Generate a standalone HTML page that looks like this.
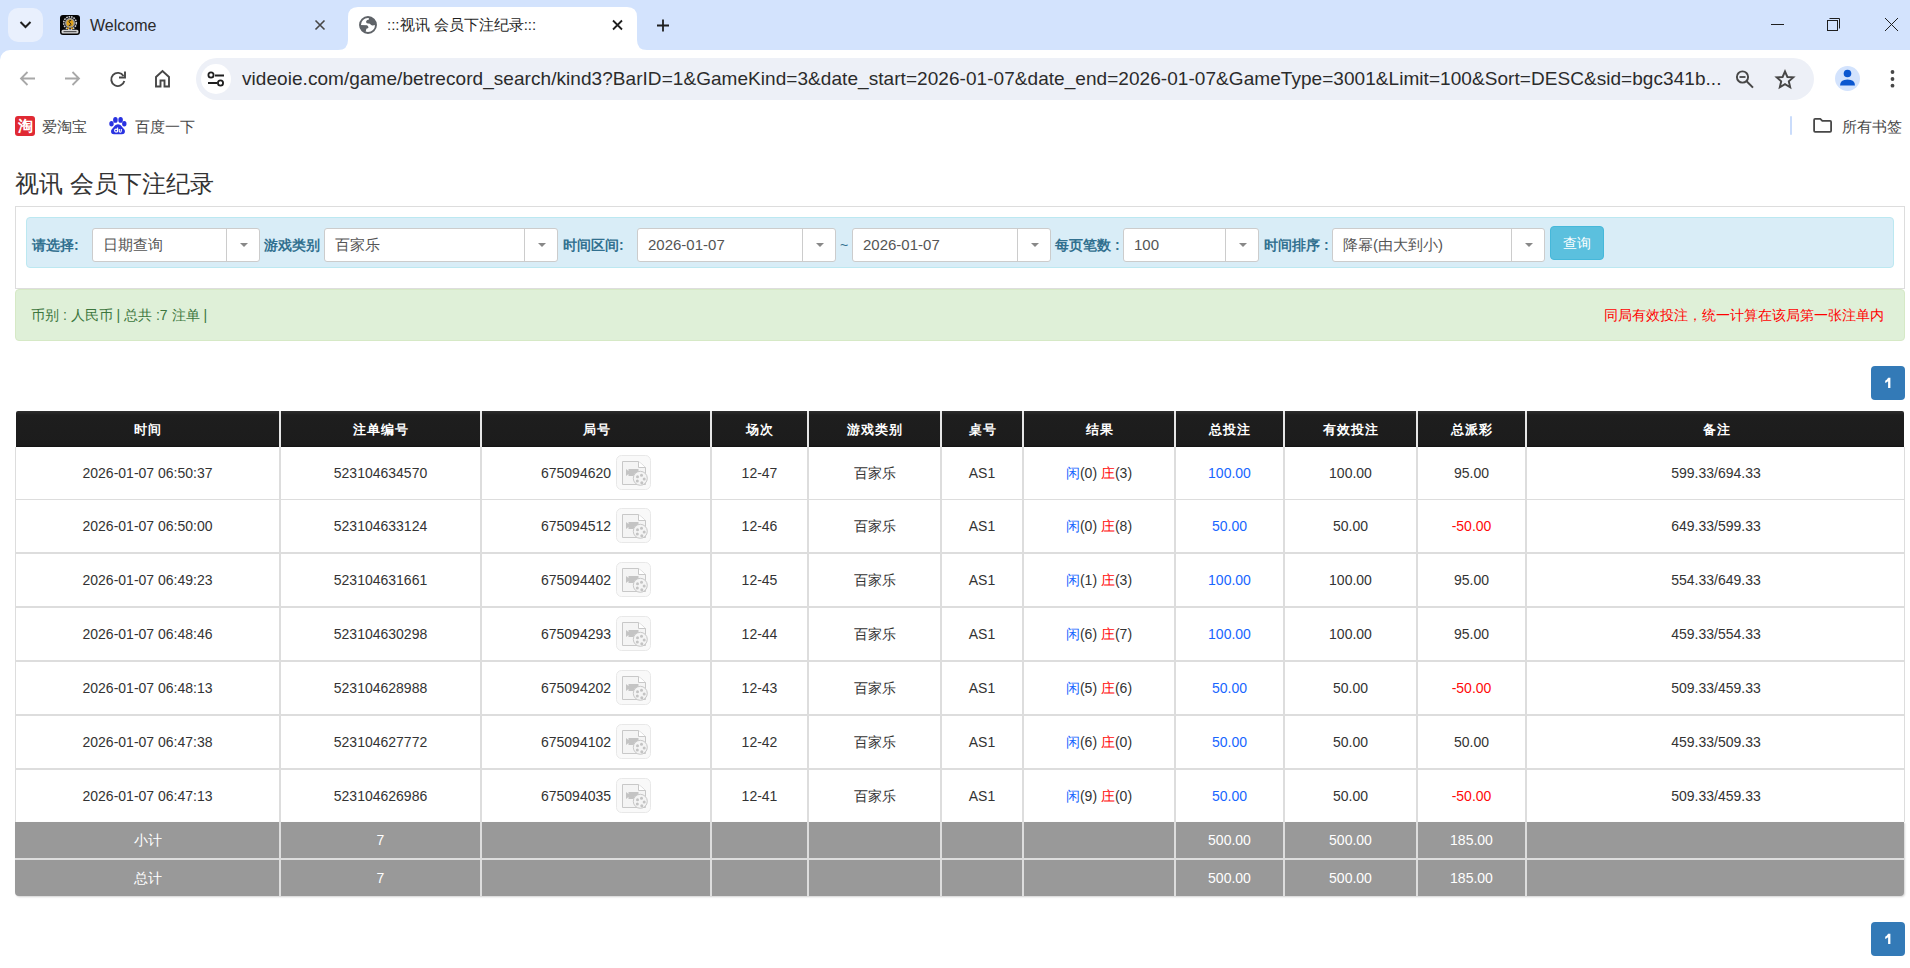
<!DOCTYPE html>
<html><head><meta charset="utf-8">
<style>
*{box-sizing:border-box}
html,body{margin:0;padding:0}
body{width:1910px;height:968px;overflow:hidden;position:relative;background:#fff;font-family:"Liberation Sans",sans-serif;color:#333}
.abs{position:absolute}
#tabstrip{left:0;top:0;width:1910px;height:62px;background:#d3e3fd}
#toolbar{left:0;top:50px;width:1910px;height:58px;background:#fff;border-top-left-radius:10px}
#omni{left:196px;top:58px;width:1618px;height:42px;border-radius:21px;background:#edf0f7}
.sel{position:absolute;top:228px;height:34px;background:#fff;border:1px solid #ccc;border-radius:3px}
.sel .d{position:absolute;top:0;bottom:0;right:32px;width:1px;background:#ccc}
.sel .c{position:absolute;top:14px;right:11.5px;width:0;height:0;border-left:4px solid transparent;border-right:4px solid transparent;border-top:4.5px solid #888}
.sel .t{position:absolute;left:10px;top:0;line-height:32px;font-size:15px;color:#555}
.cell{position:absolute;text-align:center;font-size:14px;color:#333;white-space:nowrap}
.film{display:inline-block;width:35px;height:35px;vertical-align:middle;margin-left:5px;position:relative;top:-2px}
.film svg{display:block}
.bl{color:#1866ff}.rd{color:#ff0a0a}
.lbl{position:absolute;top:236px;font-size:14px;font-weight:bold;color:#31708f;line-height:18px}
</style></head><body>
<!-- ===== Chrome tab strip ===== -->
<div id="tabstrip" class="abs"></div>
<div class="abs" style="left:8px;top:8px;width:35px;height:34px;border-radius:10px;background:#e9f0fd"></div>
<svg class="abs" style="left:0;top:0" width="1910" height="50" viewBox="0 0 1910 50">
  <!-- dropdown chevron -->
  <path d="M20.5 22 L25.5 27 L30.5 22" fill="none" stroke="#1f1f1f" stroke-width="2"/>
  <!-- active tab shape -->
  <path d="M338 50 Q348 50 348 40 L348 17 Q348 7 358 7 L627 7 Q637 7 637 17 L637 40 Q637 50 647 50 Z" fill="#fff"/>
  <!-- inactive close x -->
  <path d="M315.5 20.5 L324.5 29.5 M324.5 20.5 L315.5 29.5" stroke="#474747" stroke-width="1.6"/>
  <!-- active close x -->
  <path d="M613 20.5 L622 29.5 M622 20.5 L613 29.5" stroke="#1f1f1f" stroke-width="1.8"/>
  <!-- plus -->
  <path d="M663 19.5 L663 31.5 M657 25.5 L669 25.5" stroke="#1f1f1f" stroke-width="1.8"/>
  <!-- globe favicon -->
  <clipPath id="gc"><circle cx="368" cy="25" r="8"/></clipPath>
  <circle cx="368" cy="25" r="8" fill="#fff" stroke="#5f6368" stroke-width="1.9"/>
  <g clip-path="url(#gc)" fill="#5f6368">
    <path d="M368.7 17.2 L376 19 L376 25 L372.2 25.6 Q370.5 25 370 23.8 L366.8 23.2 Q365.8 22.5 366.2 21 Q367 19.8 369 19.6 Z"/>
    <path d="M359.5 25 L367 25.2 Q368.6 26.3 368.4 28 L366.4 28.7 L365.6 32 L359.5 31 Z"/>
  </g>
  <!-- window controls -->
  <path d="M1771 24.5 L1784 24.5" stroke="#1f1f1f" stroke-width="1"/>
  <rect x="1827.5" y="20.5" width="10" height="10" fill="none" stroke="#1f1f1f" stroke-width="1"/>
  <path d="M1829.5 18.5 L1839.5 18.5 L1839.5 28.5" fill="none" stroke="#1f1f1f" stroke-width="1"/>
  <path d="M1885 18 L1898 31 M1898 18 L1885 31" stroke="#1f1f1f" stroke-width="1"/>
</svg>
<!-- welcome favicon -->
<svg class="abs" style="left:60px;top:15px" width="20" height="20" viewBox="0 0 20 20">
  <rect x="0" y="0" width="20" height="20" rx="3" fill="#050505"/>
  <circle cx="10" cy="8" r="6.3" fill="none" stroke="#cfcfcf" stroke-width="1.6" stroke-dasharray="1.6 0.9"/>
  <circle cx="10" cy="8" r="5" fill="#9a9a9a"/>
  <circle cx="10" cy="8" r="3.6" fill="#e0a21a"/>
  <path d="M11.2 5.6 Q9 5 8.9 6.8 Q10.8 8.2 10.9 9.4 Q10.6 11 8.8 10.3" fill="none" stroke="#222" stroke-width="1"/>
  <circle cx="8" cy="13.3" r="1" fill="#e0a21a"/>
  <circle cx="12" cy="13.3" r="1" fill="#e0a21a"/>
  <rect x="1.5" y="14.8" width="17" height="3.6" rx="1.5" fill="#d5d5d5"/>
  <rect x="3.5" y="16" width="13" height="1.2" fill="#555"/>
</svg>
<div class="abs" style="left:90px;top:16px;font-size:16px;line-height:20px;color:#2a2a2a;white-space:nowrap">Welcome</div>
<div class="abs" style="left:387px;top:15px;font-size:15px;line-height:20px;color:#1f1f1f;white-space:nowrap">:::视讯 会员下注纪录:::</div>

<!-- ===== toolbar ===== -->
<div id="toolbar" class="abs"></div>
<div id="omni" class="abs"></div>
<div class="abs" style="left:201px;top:64px;width:30px;height:30px;border-radius:50%;background:#fff"></div>
<svg class="abs" style="left:0;top:50px" width="1910" height="58" viewBox="0 50 1910 58">
  <!-- back -->
  <path d="M35 78.5 L21 78.5 M27.5 72 L21 78.5 L27.5 85" fill="none" stroke="#a8a8a8" stroke-width="1.8"/>
  <!-- forward -->
  <path d="M65 78.5 L79 78.5 M72.5 72 L79 78.5 L72.5 85" fill="none" stroke="#a8a8a8" stroke-width="1.8"/>
  <!-- reload -->
  <path d="M123.5 76 A6.6 6.6 0 1 0 124.3 81" fill="none" stroke="#474747" stroke-width="1.9"/>
  <path d="M125 71.5 L125 77.5 L119 77.5" fill="none" stroke="#474747" stroke-width="1.9"/>
  <!-- home -->
  <path d="M156 86.5 L156 77 L162.5 71 L169 77 L169 86.5 L164.5 86.5 L164.5 80.5 L160.5 80.5 L160.5 86.5 Z" fill="none" stroke="#474747" stroke-width="1.9" stroke-linejoin="miter"/>
  <!-- tune -->
  <circle cx="211" cy="75" r="2.6" fill="none" stroke="#1f1f1f" stroke-width="1.8"/>
  <path d="M215 75.5 L224 75.5 M208 83 L217 83" stroke="#1f1f1f" stroke-width="1.8"/>
  <circle cx="220.5" cy="83" r="2.6" fill="none" stroke="#1f1f1f" stroke-width="1.8"/>
  <!-- zoom -->
  <circle cx="1742.5" cy="77" r="5.6" fill="none" stroke="#474747" stroke-width="1.9"/>
  <path d="M1739.5 77 L1745.5 77" stroke="#474747" stroke-width="1.8"/>
  <path d="M1746.6 81.2 L1753 87.6" stroke="#474747" stroke-width="2"/>
  <!-- star -->
  <path d="M1785 71.5 L1787.4 77 L1793.3 77.4 L1788.8 81.3 L1790.2 87.2 L1785 84.1 L1779.8 87.2 L1781.2 81.3 L1776.7 77.4 L1782.6 77 Z" fill="none" stroke="#474747" stroke-width="1.9" stroke-linejoin="miter"/>
  <!-- profile -->
  <circle cx="1847.5" cy="78.5" r="12.5" fill="#d3e3fd"/>
  <circle cx="1847.5" cy="73.5" r="3.8" fill="#0b57d0"/>
  <path d="M1840 85.5 Q1840 79.5 1847.5 79.5 Q1855 79.5 1855 85.5 Z" fill="#0b57d0"/>
  <!-- menu -->
  <circle cx="1892.5" cy="72" r="1.9" fill="#474747"/>
  <circle cx="1892.5" cy="79" r="1.9" fill="#474747"/>
  <circle cx="1892.5" cy="85.7" r="1.9" fill="#474747"/>
</svg>
<div class="abs" style="left:242px;top:67px;font-size:19px;letter-spacing:0.055px;line-height:24px;color:#2b2b2b;white-space:nowrap">videoie.com/game/betrecord_search/kind3?BarID=1&amp;GameKind=3&amp;date_start=2026-01-07&amp;date_end=2026-01-07&amp;GameType=3001&amp;Limit=100&amp;Sort=DESC&amp;sid=bgc341b...</div>

<!-- ===== bookmarks bar ===== -->
<div class="abs" style="left:15px;top:116px;width:20px;height:20px;border-radius:3px;background:#e02933;color:#fff;font-size:15px;line-height:20px;text-align:center;font-weight:bold">淘</div>
<div class="abs" style="left:42px;top:117px;font-size:15px;line-height:20px;color:#474747;white-space:nowrap">爱淘宝</div>
<svg class="abs" style="left:109px;top:116px" width="18" height="19" viewBox="0 0 18 19">
  <ellipse cx="6.4" cy="3.9" rx="2.3" ry="2.9" fill="#2932e1"/>
  <ellipse cx="11.6" cy="3.9" rx="2.3" ry="2.9" fill="#2932e1"/>
  <ellipse cx="2.5" cy="7.8" rx="2.2" ry="2.7" fill="#2932e1"/>
  <ellipse cx="15.3" cy="7.8" rx="2.2" ry="2.7" fill="#2932e1"/>
  <path d="M9 8.3 C6 8.3 4.8 11.3 3.2 12.8 C1.4 14.6 1.6 18.3 5 18.3 L13 18.3 C16.4 18.3 16.6 14.6 14.8 12.8 C13.2 11.3 12 8.3 9 8.3 Z" fill="#2932e1"/>
  <circle cx="7.1" cy="14.6" r="1.5" fill="none" stroke="#fff" stroke-width="1.1"/>
  <path d="M8.6 11.6 L8.6 16.2 M10.3 12.9 L10.3 15.1 Q10.3 16.2 11.3 16.2 Q12.3 16.2 12.3 15.1 L12.3 12.9" fill="none" stroke="#fff" stroke-width="1.1"/>
</svg>
<div class="abs" style="left:135px;top:117px;font-size:15px;line-height:20px;color:#474747;white-space:nowrap">百度一下</div>
<div class="abs" style="left:1790px;top:116px;width:2px;height:19px;border-radius:1px;background:#cadcfb"></div>
<svg class="abs" style="left:1812px;top:117px" width="22" height="17" viewBox="0 0 22 17">
  <path d="M2.1 2.9 Q2.1 1.9 3.1 1.9 L8.3 1.9 L10.3 3.9 L18.1 3.9 Q19.1 3.9 19.1 4.9 L19.1 13.8 Q19.1 14.8 18.1 14.8 L3.1 14.8 Q2.1 14.8 2.1 13.8 Z" fill="none" stroke="#474747" stroke-width="1.8" stroke-linejoin="round"/>
</svg>
<div class="abs" style="left:1842px;top:117px;font-size:15px;line-height:20px;color:#474747;white-space:nowrap">所有书签</div>

<!-- page title -->
<div class="abs" style="left:15px;top:169px;font-size:24px;line-height:30px;color:#333">视讯 会员下注纪录</div>

<!-- panel -->
<div class="abs" style="left:15px;top:206px;width:1890px;height:83px;border:1px solid #ddd;background:#fff"></div>
<div class="abs" style="left:26px;top:217px;width:1868px;height:51px;border:1px solid #bce8f1;border-radius:4px;background:#d9edf7"></div>

<div class="lbl" style="left:32px">请选择:</div>
<div class="sel" style="left:92px;width:168px"><div class="t">日期查询</div><div class="d"></div><div class="c"></div></div>
<div class="lbl" style="left:264px">游戏类别</div>
<div class="sel" style="left:324px;width:234px"><div class="t">百家乐</div><div class="d"></div><div class="c"></div></div>
<div class="lbl" style="left:563px">时间区间:</div>
<div class="sel" style="left:637px;width:199px"><div class="t">2026-01-07</div><div class="d"></div><div class="c"></div></div>
<div class="abs" style="left:840px;top:237px;font-size:14px;color:#31708f">~</div>
<div class="sel" style="left:852px;width:199px"><div class="t">2026-01-07</div><div class="d"></div><div class="c"></div></div>
<div class="lbl" style="left:1055px">每页笔数 :</div>
<div class="sel" style="left:1123px;width:136px"><div class="t">100</div><div class="d"></div><div class="c"></div></div>
<div class="lbl" style="left:1264px">时间排序 :</div>
<div class="sel" style="left:1332px;width:213px"><div class="t">降幂(由大到小)</div><div class="d"></div><div class="c"></div></div>
<div class="abs" style="left:1550px;top:226px;width:54px;height:34px;background:#5bc0de;border:1px solid #46b8da;border-radius:4px;color:#fff;font-size:14px;line-height:32px;text-align:center">查询</div>

<!-- green alert -->
<div class="abs" style="left:15px;top:289px;width:1890px;height:52px;border:1px solid #d6e9c6;border-radius:4px;background:#dff0d8"></div>
<div class="abs" style="left:31px;top:306px;font-size:14px;line-height:18px;color:#3c763d">币别 : 人民币 | 总共 :7 注单 |</div>
<div class="abs" style="left:1604px;top:306px;font-size:14px;line-height:18px;color:#f00">同局有效投注，统一计算在该局第一张注单内</div>

<!-- TABLE START -->
<div class="abs" style="left:15px;top:411px;width:1890px;height:485px;background:#fff"></div>
<div class="abs" style="left:16px;top:411px;width:1888px;height:36px;background:linear-gradient(#2e2e2e 0,#1e1e1e 4px,#1c1c1c 34px,#121212 36px);border-radius:2px 2px 0 0"></div>
<div class="abs" style="left:15px;top:822px;width:1889px;height:74px;background:#999;border-radius:0 0 4px 4px;box-shadow:1px 1px 2px rgba(0,0,0,.18)"></div>
<div class="abs" style="left:15px;top:447px;width:1px;height:375px;background:#ddd"></div>
<div class="abs" style="left:1904px;top:447px;width:1px;height:375px;background:#ddd"></div>
<div class="abs" style="left:15px;top:499px;width:1890px;height:1px;background:#ddd"></div>
<div class="abs" style="left:15px;top:552px;width:1890px;height:2px;background:#ddd"></div>
<div class="abs" style="left:15px;top:606px;width:1890px;height:2px;background:#ddd"></div>
<div class="abs" style="left:15px;top:660px;width:1890px;height:2px;background:#ddd"></div>
<div class="abs" style="left:15px;top:714px;width:1890px;height:2px;background:#ddd"></div>
<div class="abs" style="left:15px;top:768px;width:1890px;height:2px;background:#ddd"></div>
<div class="abs" style="left:15px;top:858px;width:1890px;height:2px;background:#ddd"></div>
<div class="abs" style="left:279px;top:411px;width:2px;height:485px;background:#ddd"></div>
<div class="abs" style="left:279px;top:411px;width:2px;height:36px;background:#e6e6e6"></div>
<div class="abs" style="left:480px;top:411px;width:2px;height:485px;background:#ddd"></div>
<div class="abs" style="left:480px;top:411px;width:2px;height:36px;background:#e6e6e6"></div>
<div class="abs" style="left:710px;top:411px;width:2px;height:485px;background:#ddd"></div>
<div class="abs" style="left:710px;top:411px;width:2px;height:36px;background:#e6e6e6"></div>
<div class="abs" style="left:807px;top:411px;width:2px;height:485px;background:#ddd"></div>
<div class="abs" style="left:807px;top:411px;width:2px;height:36px;background:#e6e6e6"></div>
<div class="abs" style="left:940px;top:411px;width:2px;height:485px;background:#ddd"></div>
<div class="abs" style="left:940px;top:411px;width:2px;height:36px;background:#e6e6e6"></div>
<div class="abs" style="left:1022px;top:411px;width:2px;height:485px;background:#ddd"></div>
<div class="abs" style="left:1022px;top:411px;width:2px;height:36px;background:#e6e6e6"></div>
<div class="abs" style="left:1174px;top:411px;width:2px;height:485px;background:#ddd"></div>
<div class="abs" style="left:1174px;top:411px;width:2px;height:36px;background:#e6e6e6"></div>
<div class="abs" style="left:1283px;top:411px;width:2px;height:485px;background:#ddd"></div>
<div class="abs" style="left:1283px;top:411px;width:2px;height:36px;background:#e6e6e6"></div>
<div class="abs" style="left:1416px;top:411px;width:2px;height:485px;background:#ddd"></div>
<div class="abs" style="left:1416px;top:411px;width:2px;height:36px;background:#e6e6e6"></div>
<div class="abs" style="left:1525px;top:411px;width:2px;height:485px;background:#ddd"></div>
<div class="abs" style="left:1525px;top:411px;width:2px;height:36px;background:#e6e6e6"></div>
<div class="cell" style="left:16px;top:412px;width:263px;height:36px;line-height:36px;color:#fff;font-weight:bold;font-size:13px;letter-spacing:1px;text-indent:1px">时间</div>
<div class="cell" style="left:281px;top:412px;width:199px;height:36px;line-height:36px;color:#fff;font-weight:bold;font-size:13px;letter-spacing:1px;text-indent:1px">注单编号</div>
<div class="cell" style="left:482px;top:412px;width:228px;height:36px;line-height:36px;color:#fff;font-weight:bold;font-size:13px;letter-spacing:1px;text-indent:1px">局号</div>
<div class="cell" style="left:712px;top:412px;width:95px;height:36px;line-height:36px;color:#fff;font-weight:bold;font-size:13px;letter-spacing:1px;text-indent:1px">场次</div>
<div class="cell" style="left:809px;top:412px;width:131px;height:36px;line-height:36px;color:#fff;font-weight:bold;font-size:13px;letter-spacing:1px;text-indent:1px">游戏类别</div>
<div class="cell" style="left:942px;top:412px;width:80px;height:36px;line-height:36px;color:#fff;font-weight:bold;font-size:13px;letter-spacing:1px;text-indent:1px">桌号</div>
<div class="cell" style="left:1024px;top:412px;width:150px;height:36px;line-height:36px;color:#fff;font-weight:bold;font-size:13px;letter-spacing:1px;text-indent:1px">结果</div>
<div class="cell" style="left:1176px;top:412px;width:107px;height:36px;line-height:36px;color:#fff;font-weight:bold;font-size:13px;letter-spacing:1px;text-indent:1px">总投注</div>
<div class="cell" style="left:1285px;top:412px;width:131px;height:36px;line-height:36px;color:#fff;font-weight:bold;font-size:13px;letter-spacing:1px;text-indent:1px">有效投注</div>
<div class="cell" style="left:1418px;top:412px;width:107px;height:36px;line-height:36px;color:#fff;font-weight:bold;font-size:13px;letter-spacing:1px;text-indent:1px">总派彩</div>
<div class="cell" style="left:1527px;top:412px;width:378px;height:36px;line-height:36px;color:#fff;font-weight:bold;font-size:13px;letter-spacing:1px;text-indent:1px">备注</div>
<div class="cell" style="left:16px;top:447px;width:263px;height:52px;line-height:52px;">2026-01-07 06:50:37</div>
<div class="cell" style="left:281px;top:447px;width:199px;height:52px;line-height:52px;">523104634570</div>
<div class="cell" style="left:482px;top:447px;width:228px;height:52px;line-height:52px;">675094620<span class="film"><svg width="35" height="35" viewBox="0 0 35 35"><rect x="0.5" y="0.5" width="34" height="34" rx="5" fill="#f9f9f9" stroke="#e8e8e8"/><path d="M6.5 6.5 L22.5 6.5 L29.5 12.5 L29.5 29.5 L6.5 29.5 Z" fill="#f4f4f4" stroke="#c8c8c8" stroke-width="1"/><path d="M22.5 6.5 L22.5 12.5 L29.5 12.5" fill="#fff" stroke="#c8c8c8" stroke-width="1"/><path d="M10 14 L12.5 16 L12.5 14 L22.5 14 L22.5 21 L12.5 21 L12.5 19 L10 21 Z" fill="#c4c4c4"/><circle cx="24.3" cy="23.3" r="7" fill="#f4f4f4" stroke="#c8c8c8" stroke-width="1"/><circle cx="21.5" cy="21.8" r="1.5" fill="#c4c4c4"/><circle cx="25.5" cy="20.2" r="1.5" fill="#c4c4c4"/><circle cx="28.2" cy="24.0" r="1.5" fill="#c4c4c4"/><circle cx="25.8" cy="27.8" r="1.5" fill="#c4c4c4"/><circle cx="21.3" cy="26.0" r="1.5" fill="#c4c4c4"/></svg></span></div>
<div class="cell" style="left:712px;top:447px;width:95px;height:52px;line-height:52px;">12-47</div>
<div class="cell" style="left:809px;top:447px;width:131px;height:52px;line-height:52px;">百家乐</div>
<div class="cell" style="left:942px;top:447px;width:80px;height:52px;line-height:52px;">AS1</div>
<div class="cell" style="left:1024px;top:447px;width:150px;height:52px;line-height:52px;"><span class="bl">闲</span>(0) <span class="rd">庄</span>(3)</div>
<div class="cell" style="left:1176px;top:447px;width:107px;height:52px;line-height:52px;color:#1866ff">100.00</div>
<div class="cell" style="left:1285px;top:447px;width:131px;height:52px;line-height:52px;">100.00</div>
<div class="cell" style="left:1418px;top:447px;width:107px;height:52px;line-height:52px;">95.00</div>
<div class="cell" style="left:1527px;top:447px;width:378px;height:52px;line-height:52px;">599.33/694.33</div>
<div class="cell" style="left:16px;top:500px;width:263px;height:52px;line-height:52px;">2026-01-07 06:50:00</div>
<div class="cell" style="left:281px;top:500px;width:199px;height:52px;line-height:52px;">523104633124</div>
<div class="cell" style="left:482px;top:500px;width:228px;height:52px;line-height:52px;">675094512<span class="film"><svg width="35" height="35" viewBox="0 0 35 35"><rect x="0.5" y="0.5" width="34" height="34" rx="5" fill="#f9f9f9" stroke="#e8e8e8"/><path d="M6.5 6.5 L22.5 6.5 L29.5 12.5 L29.5 29.5 L6.5 29.5 Z" fill="#f4f4f4" stroke="#c8c8c8" stroke-width="1"/><path d="M22.5 6.5 L22.5 12.5 L29.5 12.5" fill="#fff" stroke="#c8c8c8" stroke-width="1"/><path d="M10 14 L12.5 16 L12.5 14 L22.5 14 L22.5 21 L12.5 21 L12.5 19 L10 21 Z" fill="#c4c4c4"/><circle cx="24.3" cy="23.3" r="7" fill="#f4f4f4" stroke="#c8c8c8" stroke-width="1"/><circle cx="21.5" cy="21.8" r="1.5" fill="#c4c4c4"/><circle cx="25.5" cy="20.2" r="1.5" fill="#c4c4c4"/><circle cx="28.2" cy="24.0" r="1.5" fill="#c4c4c4"/><circle cx="25.8" cy="27.8" r="1.5" fill="#c4c4c4"/><circle cx="21.3" cy="26.0" r="1.5" fill="#c4c4c4"/></svg></span></div>
<div class="cell" style="left:712px;top:500px;width:95px;height:52px;line-height:52px;">12-46</div>
<div class="cell" style="left:809px;top:500px;width:131px;height:52px;line-height:52px;">百家乐</div>
<div class="cell" style="left:942px;top:500px;width:80px;height:52px;line-height:52px;">AS1</div>
<div class="cell" style="left:1024px;top:500px;width:150px;height:52px;line-height:52px;"><span class="bl">闲</span>(0) <span class="rd">庄</span>(8)</div>
<div class="cell" style="left:1176px;top:500px;width:107px;height:52px;line-height:52px;color:#1866ff">50.00</div>
<div class="cell" style="left:1285px;top:500px;width:131px;height:52px;line-height:52px;">50.00</div>
<div class="cell" style="left:1418px;top:500px;width:107px;height:52px;line-height:52px;color:#ff0a0a">-50.00</div>
<div class="cell" style="left:1527px;top:500px;width:378px;height:52px;line-height:52px;">649.33/599.33</div>
<div class="cell" style="left:16px;top:554px;width:263px;height:52px;line-height:52px;">2026-01-07 06:49:23</div>
<div class="cell" style="left:281px;top:554px;width:199px;height:52px;line-height:52px;">523104631661</div>
<div class="cell" style="left:482px;top:554px;width:228px;height:52px;line-height:52px;">675094402<span class="film"><svg width="35" height="35" viewBox="0 0 35 35"><rect x="0.5" y="0.5" width="34" height="34" rx="5" fill="#f9f9f9" stroke="#e8e8e8"/><path d="M6.5 6.5 L22.5 6.5 L29.5 12.5 L29.5 29.5 L6.5 29.5 Z" fill="#f4f4f4" stroke="#c8c8c8" stroke-width="1"/><path d="M22.5 6.5 L22.5 12.5 L29.5 12.5" fill="#fff" stroke="#c8c8c8" stroke-width="1"/><path d="M10 14 L12.5 16 L12.5 14 L22.5 14 L22.5 21 L12.5 21 L12.5 19 L10 21 Z" fill="#c4c4c4"/><circle cx="24.3" cy="23.3" r="7" fill="#f4f4f4" stroke="#c8c8c8" stroke-width="1"/><circle cx="21.5" cy="21.8" r="1.5" fill="#c4c4c4"/><circle cx="25.5" cy="20.2" r="1.5" fill="#c4c4c4"/><circle cx="28.2" cy="24.0" r="1.5" fill="#c4c4c4"/><circle cx="25.8" cy="27.8" r="1.5" fill="#c4c4c4"/><circle cx="21.3" cy="26.0" r="1.5" fill="#c4c4c4"/></svg></span></div>
<div class="cell" style="left:712px;top:554px;width:95px;height:52px;line-height:52px;">12-45</div>
<div class="cell" style="left:809px;top:554px;width:131px;height:52px;line-height:52px;">百家乐</div>
<div class="cell" style="left:942px;top:554px;width:80px;height:52px;line-height:52px;">AS1</div>
<div class="cell" style="left:1024px;top:554px;width:150px;height:52px;line-height:52px;"><span class="bl">闲</span>(1) <span class="rd">庄</span>(3)</div>
<div class="cell" style="left:1176px;top:554px;width:107px;height:52px;line-height:52px;color:#1866ff">100.00</div>
<div class="cell" style="left:1285px;top:554px;width:131px;height:52px;line-height:52px;">100.00</div>
<div class="cell" style="left:1418px;top:554px;width:107px;height:52px;line-height:52px;">95.00</div>
<div class="cell" style="left:1527px;top:554px;width:378px;height:52px;line-height:52px;">554.33/649.33</div>
<div class="cell" style="left:16px;top:608px;width:263px;height:52px;line-height:52px;">2026-01-07 06:48:46</div>
<div class="cell" style="left:281px;top:608px;width:199px;height:52px;line-height:52px;">523104630298</div>
<div class="cell" style="left:482px;top:608px;width:228px;height:52px;line-height:52px;">675094293<span class="film"><svg width="35" height="35" viewBox="0 0 35 35"><rect x="0.5" y="0.5" width="34" height="34" rx="5" fill="#f9f9f9" stroke="#e8e8e8"/><path d="M6.5 6.5 L22.5 6.5 L29.5 12.5 L29.5 29.5 L6.5 29.5 Z" fill="#f4f4f4" stroke="#c8c8c8" stroke-width="1"/><path d="M22.5 6.5 L22.5 12.5 L29.5 12.5" fill="#fff" stroke="#c8c8c8" stroke-width="1"/><path d="M10 14 L12.5 16 L12.5 14 L22.5 14 L22.5 21 L12.5 21 L12.5 19 L10 21 Z" fill="#c4c4c4"/><circle cx="24.3" cy="23.3" r="7" fill="#f4f4f4" stroke="#c8c8c8" stroke-width="1"/><circle cx="21.5" cy="21.8" r="1.5" fill="#c4c4c4"/><circle cx="25.5" cy="20.2" r="1.5" fill="#c4c4c4"/><circle cx="28.2" cy="24.0" r="1.5" fill="#c4c4c4"/><circle cx="25.8" cy="27.8" r="1.5" fill="#c4c4c4"/><circle cx="21.3" cy="26.0" r="1.5" fill="#c4c4c4"/></svg></span></div>
<div class="cell" style="left:712px;top:608px;width:95px;height:52px;line-height:52px;">12-44</div>
<div class="cell" style="left:809px;top:608px;width:131px;height:52px;line-height:52px;">百家乐</div>
<div class="cell" style="left:942px;top:608px;width:80px;height:52px;line-height:52px;">AS1</div>
<div class="cell" style="left:1024px;top:608px;width:150px;height:52px;line-height:52px;"><span class="bl">闲</span>(6) <span class="rd">庄</span>(7)</div>
<div class="cell" style="left:1176px;top:608px;width:107px;height:52px;line-height:52px;color:#1866ff">100.00</div>
<div class="cell" style="left:1285px;top:608px;width:131px;height:52px;line-height:52px;">100.00</div>
<div class="cell" style="left:1418px;top:608px;width:107px;height:52px;line-height:52px;">95.00</div>
<div class="cell" style="left:1527px;top:608px;width:378px;height:52px;line-height:52px;">459.33/554.33</div>
<div class="cell" style="left:16px;top:662px;width:263px;height:52px;line-height:52px;">2026-01-07 06:48:13</div>
<div class="cell" style="left:281px;top:662px;width:199px;height:52px;line-height:52px;">523104628988</div>
<div class="cell" style="left:482px;top:662px;width:228px;height:52px;line-height:52px;">675094202<span class="film"><svg width="35" height="35" viewBox="0 0 35 35"><rect x="0.5" y="0.5" width="34" height="34" rx="5" fill="#f9f9f9" stroke="#e8e8e8"/><path d="M6.5 6.5 L22.5 6.5 L29.5 12.5 L29.5 29.5 L6.5 29.5 Z" fill="#f4f4f4" stroke="#c8c8c8" stroke-width="1"/><path d="M22.5 6.5 L22.5 12.5 L29.5 12.5" fill="#fff" stroke="#c8c8c8" stroke-width="1"/><path d="M10 14 L12.5 16 L12.5 14 L22.5 14 L22.5 21 L12.5 21 L12.5 19 L10 21 Z" fill="#c4c4c4"/><circle cx="24.3" cy="23.3" r="7" fill="#f4f4f4" stroke="#c8c8c8" stroke-width="1"/><circle cx="21.5" cy="21.8" r="1.5" fill="#c4c4c4"/><circle cx="25.5" cy="20.2" r="1.5" fill="#c4c4c4"/><circle cx="28.2" cy="24.0" r="1.5" fill="#c4c4c4"/><circle cx="25.8" cy="27.8" r="1.5" fill="#c4c4c4"/><circle cx="21.3" cy="26.0" r="1.5" fill="#c4c4c4"/></svg></span></div>
<div class="cell" style="left:712px;top:662px;width:95px;height:52px;line-height:52px;">12-43</div>
<div class="cell" style="left:809px;top:662px;width:131px;height:52px;line-height:52px;">百家乐</div>
<div class="cell" style="left:942px;top:662px;width:80px;height:52px;line-height:52px;">AS1</div>
<div class="cell" style="left:1024px;top:662px;width:150px;height:52px;line-height:52px;"><span class="bl">闲</span>(5) <span class="rd">庄</span>(6)</div>
<div class="cell" style="left:1176px;top:662px;width:107px;height:52px;line-height:52px;color:#1866ff">50.00</div>
<div class="cell" style="left:1285px;top:662px;width:131px;height:52px;line-height:52px;">50.00</div>
<div class="cell" style="left:1418px;top:662px;width:107px;height:52px;line-height:52px;color:#ff0a0a">-50.00</div>
<div class="cell" style="left:1527px;top:662px;width:378px;height:52px;line-height:52px;">509.33/459.33</div>
<div class="cell" style="left:16px;top:716px;width:263px;height:52px;line-height:52px;">2026-01-07 06:47:38</div>
<div class="cell" style="left:281px;top:716px;width:199px;height:52px;line-height:52px;">523104627772</div>
<div class="cell" style="left:482px;top:716px;width:228px;height:52px;line-height:52px;">675094102<span class="film"><svg width="35" height="35" viewBox="0 0 35 35"><rect x="0.5" y="0.5" width="34" height="34" rx="5" fill="#f9f9f9" stroke="#e8e8e8"/><path d="M6.5 6.5 L22.5 6.5 L29.5 12.5 L29.5 29.5 L6.5 29.5 Z" fill="#f4f4f4" stroke="#c8c8c8" stroke-width="1"/><path d="M22.5 6.5 L22.5 12.5 L29.5 12.5" fill="#fff" stroke="#c8c8c8" stroke-width="1"/><path d="M10 14 L12.5 16 L12.5 14 L22.5 14 L22.5 21 L12.5 21 L12.5 19 L10 21 Z" fill="#c4c4c4"/><circle cx="24.3" cy="23.3" r="7" fill="#f4f4f4" stroke="#c8c8c8" stroke-width="1"/><circle cx="21.5" cy="21.8" r="1.5" fill="#c4c4c4"/><circle cx="25.5" cy="20.2" r="1.5" fill="#c4c4c4"/><circle cx="28.2" cy="24.0" r="1.5" fill="#c4c4c4"/><circle cx="25.8" cy="27.8" r="1.5" fill="#c4c4c4"/><circle cx="21.3" cy="26.0" r="1.5" fill="#c4c4c4"/></svg></span></div>
<div class="cell" style="left:712px;top:716px;width:95px;height:52px;line-height:52px;">12-42</div>
<div class="cell" style="left:809px;top:716px;width:131px;height:52px;line-height:52px;">百家乐</div>
<div class="cell" style="left:942px;top:716px;width:80px;height:52px;line-height:52px;">AS1</div>
<div class="cell" style="left:1024px;top:716px;width:150px;height:52px;line-height:52px;"><span class="bl">闲</span>(6) <span class="rd">庄</span>(0)</div>
<div class="cell" style="left:1176px;top:716px;width:107px;height:52px;line-height:52px;color:#1866ff">50.00</div>
<div class="cell" style="left:1285px;top:716px;width:131px;height:52px;line-height:52px;">50.00</div>
<div class="cell" style="left:1418px;top:716px;width:107px;height:52px;line-height:52px;">50.00</div>
<div class="cell" style="left:1527px;top:716px;width:378px;height:52px;line-height:52px;">459.33/509.33</div>
<div class="cell" style="left:16px;top:770px;width:263px;height:52px;line-height:52px;">2026-01-07 06:47:13</div>
<div class="cell" style="left:281px;top:770px;width:199px;height:52px;line-height:52px;">523104626986</div>
<div class="cell" style="left:482px;top:770px;width:228px;height:52px;line-height:52px;">675094035<span class="film"><svg width="35" height="35" viewBox="0 0 35 35"><rect x="0.5" y="0.5" width="34" height="34" rx="5" fill="#f9f9f9" stroke="#e8e8e8"/><path d="M6.5 6.5 L22.5 6.5 L29.5 12.5 L29.5 29.5 L6.5 29.5 Z" fill="#f4f4f4" stroke="#c8c8c8" stroke-width="1"/><path d="M22.5 6.5 L22.5 12.5 L29.5 12.5" fill="#fff" stroke="#c8c8c8" stroke-width="1"/><path d="M10 14 L12.5 16 L12.5 14 L22.5 14 L22.5 21 L12.5 21 L12.5 19 L10 21 Z" fill="#c4c4c4"/><circle cx="24.3" cy="23.3" r="7" fill="#f4f4f4" stroke="#c8c8c8" stroke-width="1"/><circle cx="21.5" cy="21.8" r="1.5" fill="#c4c4c4"/><circle cx="25.5" cy="20.2" r="1.5" fill="#c4c4c4"/><circle cx="28.2" cy="24.0" r="1.5" fill="#c4c4c4"/><circle cx="25.8" cy="27.8" r="1.5" fill="#c4c4c4"/><circle cx="21.3" cy="26.0" r="1.5" fill="#c4c4c4"/></svg></span></div>
<div class="cell" style="left:712px;top:770px;width:95px;height:52px;line-height:52px;">12-41</div>
<div class="cell" style="left:809px;top:770px;width:131px;height:52px;line-height:52px;">百家乐</div>
<div class="cell" style="left:942px;top:770px;width:80px;height:52px;line-height:52px;">AS1</div>
<div class="cell" style="left:1024px;top:770px;width:150px;height:52px;line-height:52px;"><span class="bl">闲</span>(9) <span class="rd">庄</span>(0)</div>
<div class="cell" style="left:1176px;top:770px;width:107px;height:52px;line-height:52px;color:#1866ff">50.00</div>
<div class="cell" style="left:1285px;top:770px;width:131px;height:52px;line-height:52px;">50.00</div>
<div class="cell" style="left:1418px;top:770px;width:107px;height:52px;line-height:52px;color:#ff0a0a">-50.00</div>
<div class="cell" style="left:1527px;top:770px;width:378px;height:52px;line-height:52px;">509.33/459.33</div>
<div class="cell" style="left:16px;top:822px;width:263px;height:36px;line-height:36px;color:#fff">小计</div>
<div class="cell" style="left:281px;top:822px;width:199px;height:36px;line-height:36px;color:#fff">7</div>
<div class="cell" style="left:1176px;top:822px;width:107px;height:36px;line-height:36px;color:#fff">500.00</div>
<div class="cell" style="left:1285px;top:822px;width:131px;height:36px;line-height:36px;color:#fff">500.00</div>
<div class="cell" style="left:1418px;top:822px;width:107px;height:36px;line-height:36px;color:#fff">185.00</div>
<div class="cell" style="left:16px;top:860px;width:263px;height:36px;line-height:36px;color:#fff">总计</div>
<div class="cell" style="left:281px;top:860px;width:199px;height:36px;line-height:36px;color:#fff">7</div>
<div class="cell" style="left:1176px;top:860px;width:107px;height:36px;line-height:36px;color:#fff">500.00</div>
<div class="cell" style="left:1285px;top:860px;width:131px;height:36px;line-height:36px;color:#fff">500.00</div>
<div class="cell" style="left:1418px;top:860px;width:107px;height:36px;line-height:36px;color:#fff">185.00</div>
<!-- TABLE END -->
<!-- pagination -->
<div class="abs" style="left:1871px;top:366px;width:34px;height:34px;background:#337ab7;border-radius:4px;color:#fff;font-size:14px;font-weight:bold;line-height:34px;text-align:center"><svg width="34" height="34" viewBox="0 0 34 34" style="display:block"><path d="M17.1 11.8 L19.4 11.8 L19.4 22 L17.1 22 L17.1 15.2 Q15.8 16.3 14.2 16.9 L14.2 14.8 Q16.2 13.8 17.1 11.8 Z" fill="#fff"/></svg></div>
<div class="abs" style="left:1871px;top:922px;width:34px;height:34px;background:#337ab7;border-radius:4px;color:#fff;font-size:14px;font-weight:bold;line-height:34px;text-align:center"><svg width="34" height="34" viewBox="0 0 34 34" style="display:block"><path d="M17.1 11.8 L19.4 11.8 L19.4 22 L17.1 22 L17.1 15.2 Q15.8 16.3 14.2 16.9 L14.2 14.8 Q16.2 13.8 17.1 11.8 Z" fill="#fff"/></svg></div>

</body></html>
